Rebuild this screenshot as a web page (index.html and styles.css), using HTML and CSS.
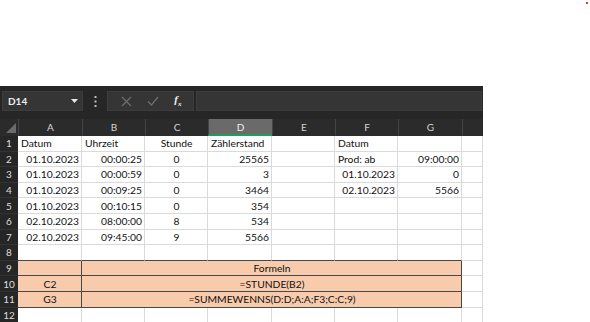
FILE: index.html
```html
<!DOCTYPE html>
<html>
<head>
  <title>Zählerstand - Mappe1</title>
  <link rel="stylesheet" href="styles.css">
</head>
<body>
  <span class="marker"></span>
  <div class="excel">
    <div class="formula-bar">
      <div class="name-box">
        <span>D14</span>
        <svg class="drop" width="7" height="4" viewBox="0 0 7 4"><path d="M0 0h7L3.5 4z" fill="#e6e6e6"/></svg>
      </div>
      <div class="dots">
        <svg width="3" height="11" viewBox="0 0 3 11"><rect x="0.5" y="0" width="2" height="2" fill="#bdbdbd"/><rect x="0.5" y="4.5" width="2" height="2" fill="#bdbdbd"/><rect x="0.5" y="9" width="2" height="2" fill="#bdbdbd"/></svg>
      </div>
      <div class="fx-buttons">
        <svg width="11" height="11" viewBox="0 0 11 11"><path d="M1 1l9 9M10 1l-9 9" stroke="#6e6e6e" stroke-width="1.2"/></svg>
        <svg width="12" height="10" viewBox="0 0 12 10"><path d="M1 5.5l3.5 3.5L11 1" stroke="#6e6e6e" stroke-width="1.2" fill="none"/></svg>
        <span class="fx">f<sub>x</sub></span>
      </div>
      <div class="formula-input"></div>
    </div>

    <table class="sheet">
      <colgroup>
        <col style="width:18px"><col style="width:64px"><col style="width:63px"><col style="width:63px"><col style="width:64px"><col style="width:63px"><col style="width:63px"><col style="width:64px"><col style="width:21px">
      </colgroup>
      <tr class="heads">
        <th class="corner"><svg width="18" height="16" viewBox="0 0 18 16"><path d="M16 4v10H6z" fill="#6b6b6b"/></svg></th>
        <th>A</th><th>B</th><th>C</th><th class="active">D</th><th>E</th><th>F</th><th>G</th><th></th>
      </tr>
      <tr>
        <th>1</th><td>Datum</td><td>Uhrzeit</td><td class="c">Stunde</td><td>Zählerstand</td><td></td><td>Datum</td><td></td><td></td>
      </tr>
      <tr>
        <th>2</th><td class="r">01.10.2023</td><td class="r">00:00:25</td><td class="c">0</td><td class="r">25565</td><td></td><td>Prod: ab</td><td class="r">09:00:00</td><td></td>
      </tr>
      <tr>
        <th>3</th><td class="r">01.10.2023</td><td class="r">00:00:59</td><td class="c">0</td><td class="r">3</td><td></td><td class="r">01.10.2023</td><td class="r">0</td><td></td>
      </tr>
      <tr>
        <th>4</th><td class="r">01.10.2023</td><td class="r">00:09:25</td><td class="c">0</td><td class="r">3464</td><td></td><td class="r">02.10.2023</td><td class="r">5566</td><td></td>
      </tr>
      <tr>
        <th>5</th><td class="r">01.10.2023</td><td class="r">00:10:15</td><td class="c">0</td><td class="r">354</td><td></td><td></td><td></td><td></td>
      </tr>
      <tr>
        <th>6</th><td class="r">02.10.2023</td><td class="r">08:00:00</td><td class="c">8</td><td class="r">534</td><td></td><td></td><td></td><td></td>
      </tr>
      <tr>
        <th>7</th><td class="r">02.10.2023</td><td class="r">09:45:00</td><td class="c">9</td><td class="r">5566</td><td></td><td></td><td></td><td></td>
      </tr>
      <tr class="above-box">
        <th>8</th><td></td><td></td><td></td><td></td><td></td><td></td><td></td><td></td>
      </tr>
      <tr class="box">
        <th>9</th><td></td><td colspan="6" class="c">Formeln</td><td class="plain"></td>
      </tr>
      <tr class="box">
        <th>10</th><td class="c">C2</td><td colspan="6" class="c">=STUNDE(B2)</td><td class="plain"></td>
      </tr>
      <tr class="box">
        <th>11</th><td class="c">G3</td><td colspan="6" class="c">=SUMMEWENNS(D:D;A:A;F3;C:C;9)</td><td class="plain"></td>
      </tr>
      <tr>
        <th>12</th><td></td><td></td><td></td><td></td><td></td><td></td><td></td><td></td>
      </tr>
    </table>
  </div>
</body>
</html>
```

FILE: styles.css
```css
body {
  margin: 0;
  background-color: white;
  font-family: Lato, "Open Sans", sans-serif;
}
.marker {
  position: absolute;
  left: 586px;
  top: 2px;
  width: 2px;
  height: 2px;
  background-color: #e53935;
}
.excel {
  margin-top: 86px;
  width: 483px;
}

/* formula bar */
.formula-bar {
  display: flex;
  height: 33px;
  padding: 5px 0 0 2px;
  box-sizing: border-box;
  background-color: #262626;
}
.name-box,
.fx-buttons,
.formula-input {
  height: 20px;
  box-sizing: border-box;
  background-color: #353535;
  border: 1px solid #3d3d3d;
}
.name-box {
  width: 81px;
  display: flex;
  align-items: center;
  justify-content: space-between;
  padding: 0 4px 0 5px;
  color: #ececec;
  font-size: 10px;
  font-weight: bold;
}
.dots {
  width: 24px;
  display: flex;
  align-items: center;
  justify-content: center;
  height: 20px;
}
.fx-buttons {
  width: 87px;
  display: flex;
  align-items: center;
  justify-content: space-around;
  padding: 0 4px 0 6px;
}
.fx {
  color: #f2f2f2;
  font-family: "Liberation Serif", serif;
  font-style: italic;
  font-weight: bold;
  font-size: 11px;
}
.fx sub {
  font-size: 7px;
}
.formula-input {
  width: 286px;
  margin-left: 2px;
}

/* sheet */
.sheet {
  table-layout: fixed;
  width: 483px;
  border-collapse: separate;
  border-spacing: 0;
  font-size: 10.3px;
  color: #111;
}
.sheet tr {
  height: 15.6px;
}
.sheet td {
  padding: 0 2px 0 3px;
  border-right: 1px solid #dadada;
  border-bottom: 1px solid #dadada;
  white-space: nowrap;
  overflow: hidden;
  line-height: 14px;
  vertical-align: middle;
}
.sheet th {
  background-color: #262626;
  color: #dedede;
  font-weight: normal;
  font-size: 10px;
  padding: 0;
  border-bottom: 1px solid #333;
  text-align: center;
}
.heads {
  height: 16px;
}
.heads th {
  background-color: #2b2b2b;
  color: #d4d4d4;
  border-left: 1px solid #444;
  border-bottom: 1px solid #2b2b2b;
}
.heads th.corner {
  border-left: none;
  padding: 0;
  line-height: 0;
  vertical-align: bottom;
}
.heads th.active {
  background-color: #6a6a6a;
  color: #f0f0f0;
  border-bottom: 2px solid #1e9e5a;
}
.r {
  text-align: right;
}
.c {
  text-align: center;
}
.above-box td:not(:last-child) {
  border-bottom-color: #484848;
}
.box td {
  background-color: #f8cbad;
  border-right-color: #484848;
  border-bottom-color: #484848;
}
.box td.plain {
  background-color: white;
  border-right-color: #dadada;
  border-bottom-color: #dadada;
}
```
